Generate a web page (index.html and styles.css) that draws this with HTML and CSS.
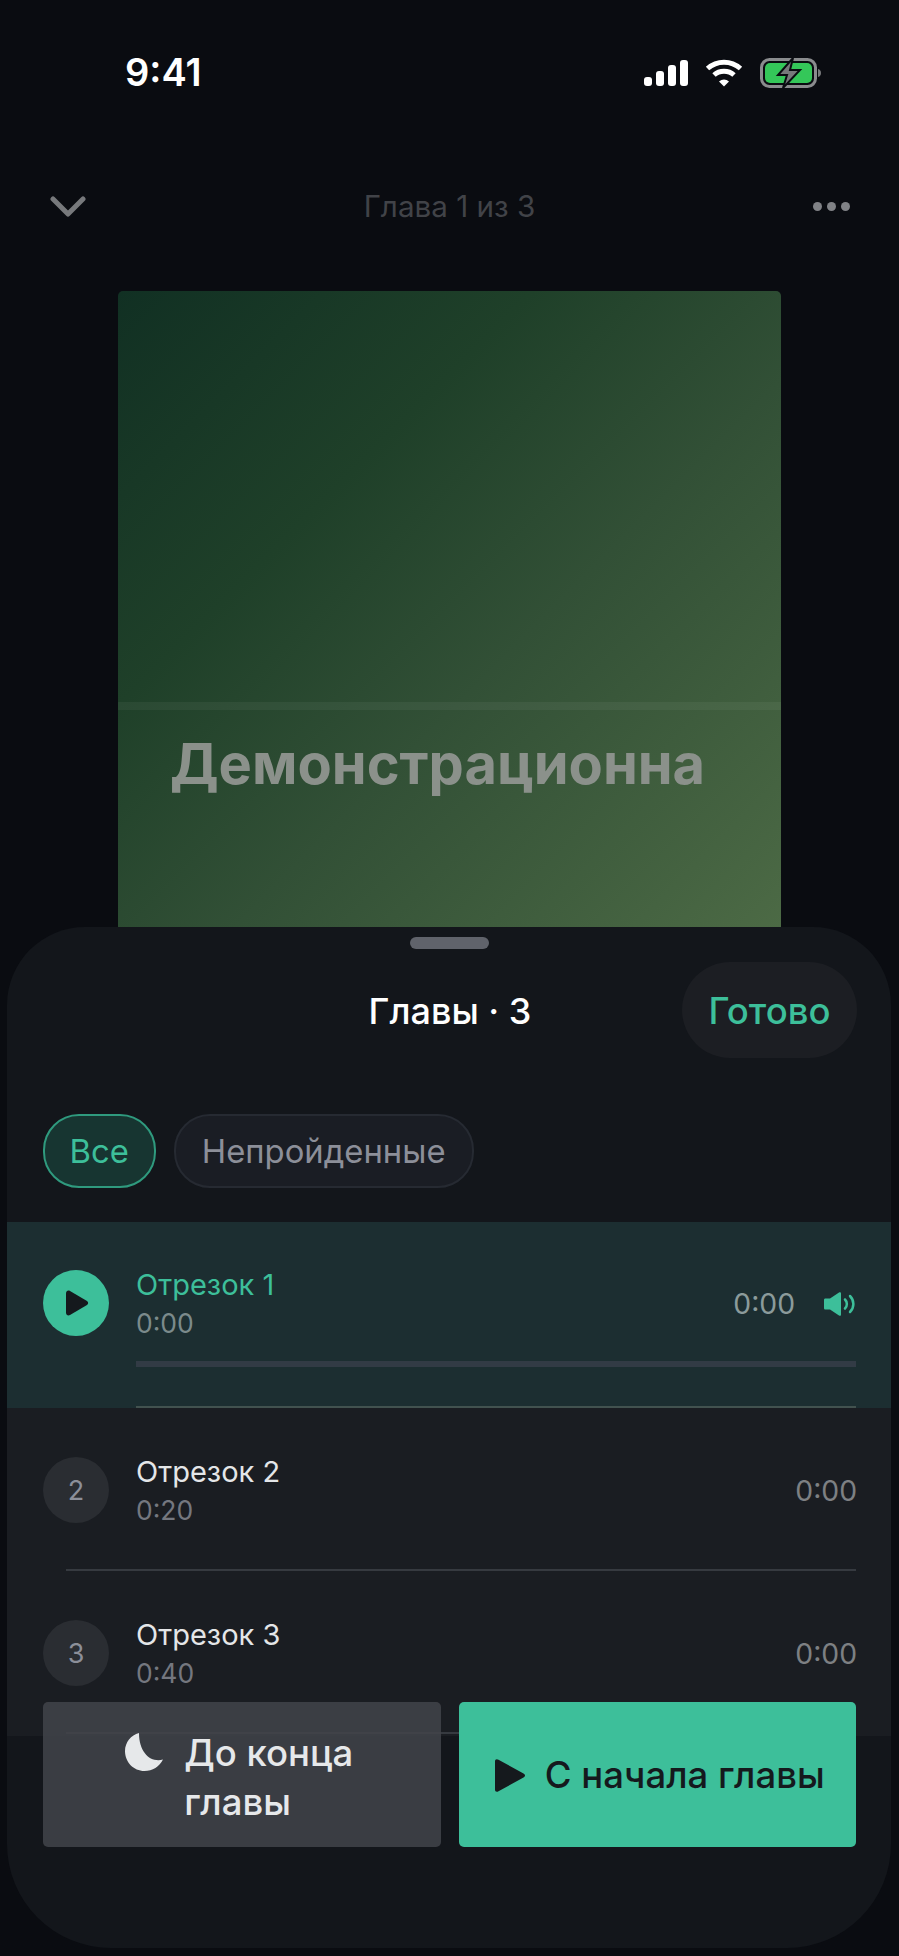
FILE: index.html
```html
<!DOCTYPE html>
<html lang="ru">
  <head>
    <meta charset="UTF-8" />
    <meta name="viewport" content="width=device-width, initial-scale=1.0" />
    <link rel="stylesheet" href="styles.css">
    <title>Главы</title>
  </head>
  <body>
    <div class="phone">
      <div class="status">
        <span class="time">9:41</span>
        <div class="status-icons">
          <svg class="signal" width="44" height="26" viewBox="0 0 44 26" fill="#fff">
            <rect x="0" y="17" width="8" height="9" rx="3"/>
            <rect x="12" y="11" width="8" height="15" rx="3"/>
            <rect x="24" y="5" width="8" height="21" rx="3"/>
            <rect x="36" y="0" width="8" height="26" rx="3"/>
          </svg>
          <svg class="wifi" width="38" height="28" viewBox="0 0 38 28" fill="none" stroke="#fff" stroke-width="5">
            <path d="M2.5 9.5C12 1 26 1 35.500 9.500"/>
            <path d="M9 16C14.500 11 23.500 11 29 16"/>
            <path d="M14 22.500L19 27.500L24 22.500C21 19.800 17 19.800 14 22.500Z" fill="#fff" stroke="none"/>
          </svg>
          <svg class="battery" width="62" height="30" viewBox="0 0 62 30" fill="none">
            <rect x="1.500" y="1.500" width="54" height="27" rx="8" stroke="#8a8c8e" stroke-width="3"/>
            <rect x="5" y="5" width="47" height="20" rx="5" fill="#34c759"/>
            <path d="M58 11c2 .5 3 2 3 4s-1 3.500-3 4z" fill="#77797b"/>
            <path d="M33 0L18 17h9l-4 13L40 12h-10z" fill="#77797b" stroke="#0a0c11" stroke-width="2"/>
          </svg>
        </div>
      </div>

      <div class="topbar">
        <svg width="36" height="22" viewBox="0 0 36 22" fill="none" stroke="#77797c" stroke-width="5" stroke-linecap="round" stroke-linejoin="round">
          <path d="M3 3L18 18L33 3"/>
        </svg>
        <span class="topbar-title">Глава 1 из 3</span>
        <div class="dots"><i></i><i></i><i></i></div>
      </div>

      <div class="cover">
        <div class="cover-line"></div>
        <div class="cover-title">Демонстрационна</div>
      </div>

      <div class="sheet">
        <div class="handle"></div>
        <div class="sheet-head">
          <span class="sheet-title">Главы · 3</span>
          <span class="done">Готово</span>
        </div>
        <div class="chips">
          <span class="chip chip-active">Все</span>
          <span class="chip">Непройденные</span>
        </div>

        <div class="list">
          <div class="row row-active">
            <div class="badge badge-play">
              <svg width="24" height="26" viewBox="0 0 24 26" fill="#15191d"><path d="M1 3.500C1 1 3 0 5 1L22 11c1.500 1 1.500 3 0 4L5 25c-2 1-4 0-4-2.500z"/></svg>
            </div>
            <div class="row-text">
              <div class="row-name">Отрезок 1</div>
              <div class="row-sub">0:00</div>
            </div>
            <span class="row-time">0:00</span>
            <svg class="speaker" width="32" height="24" viewBox="0 0 32 24" fill="none">
              <path d="M0 8c0-1 .5-1.500 1.500-1.500H6L15 .500C16.500-.300 17 .500 17 1.500v21c0 1-.5 1.800-2 1L6 17.500H1.500C.5 17.500 0 17 0 16z" fill="#3dbf9a"/>
              <path d="M21 7.500c2.500 2.500 2.500 6.500 0 9M26 4c4.500 4.500 4.500 11.500 0 16" stroke="#3dbf9a" stroke-width="2.500" stroke-linecap="round"/>
            </svg>
            <div class="progress"></div>
            <div class="row-line row-line-short"></div>
          </div>

          <div class="row">
            <div class="badge">2</div>
            <div class="row-text">
              <div class="row-name">Отрезок 2</div>
              <div class="row-sub">0:20</div>
            </div>
            <span class="row-time row-time-end">0:00</span>
            <div class="row-line"></div>
          </div>

          <div class="row">
            <div class="badge">3</div>
            <div class="row-text">
              <div class="row-name">Отрезок 3</div>
              <div class="row-sub">0:40</div>
            </div>
            <span class="row-time row-time-end">0:00</span>
            <div class="row-line"></div>
          </div>
        </div>

        <div class="actions">
          <div class="action action-sleep">
            <svg class="moon" width="38" height="38" viewBox="0 0 38 38"><path d="M14 0C6 2 0 9.500 0 18c0 11 8.500 20 19.500 20 8 0 15-4.500 18.500-11.500C26 30 14 20 14 0z" fill="#e6e8ea"/></svg>
            <span class="action-label">До конца<br>главы</span>
          </div>
          <div class="action action-play">
            <svg width="30" height="33" viewBox="0 0 30 33" fill="#15191d"><path d="M0 2.500C0 .5 1.500-.5 3.500.8L28.500 14.500c2 1 2 3 0 4L3.500 32.200C1.500 33.500 0 32.500 0 30.500z"/></svg>
            <span class="action-label">С начала главы</span>
          </div>
        </div>
      </div>
    </div>
  </body>
</html>
```

FILE: styles.css
```css
* {
  box-sizing: border-box;
}
body {
  margin: 0;
  background: #0a0c11;
  font-family: Inter, "Noto Sans", sans-serif;
}
.phone {
  width: 899px;
  height: 1956px;
  overflow: hidden;
}
.status {
  height: 146px;
  padding: 49px 77px 0 125px;
  display: flex;
  justify-content: space-between;
  align-items: flex-start;
}
.time {
  font-size: 38px;
  line-height: 46px;
  font-weight: 600;
  color: #fff;
}
.status-icons {
  display: flex;
  align-items: center;
  gap: 17px;
  padding-top: 9px;
}
.topbar {
  height: 145px;
  padding: 40px 49px 0 50px;
  display: flex;
  justify-content: space-between;
  align-items: flex-start;
}
.topbar svg {
  margin-top: 10px;
}
.topbar-title {
  font-size: 29.600px;
  line-height: 40px;
  color: #414348;
}
.dots {
  display: flex;
  gap: 5px;
  margin-top: 16px;
}
.dots i {
  width: 9px;
  height: 9px;
  border-radius: 50%;
  background: #808286;
}
.cover {
  width: 663px;
  height: 636px;
  margin-left: 118px;
  padding-top: 411px;
  border-radius: 5px 5px 0 0;
  background: linear-gradient(135deg, #113023 0%, #1f4029 32%, #325036 58%, #4c6a45 100%);
}
.cover-line {
  height: 8px;
  background: rgba(255, 255, 255, 0.05);
}
.cover-title {
  margin: 20px 0 0 52px;
  font-size: 56px;
  line-height: 68px;
  font-weight: 700;
  white-space: nowrap;
  color: #8b918b;
}
.sheet {
  position: relative;
  width: 884px;
  height: 1021px;
  margin-left: 7px;
  padding-top: 10px;
  border-radius: 78px 78px 104px 104px;
  background: #13161b;
}
.handle {
  width: 79px;
  height: 12px;
  margin: 0 auto;
  border-radius: 6px;
  background: #60636b;
}
.sheet-head {
  position: relative;
  height: 96px;
  margin-top: 13px;
  display: flex;
  justify-content: center;
  align-items: center;
}
.sheet-title {
  padding: 2px 0 0 2px;
  font-size: 36px;
  font-weight: 500;
  color: #fff;
}
.done {
  position: absolute;
  right: 34px;
  top: 0;
  width: 175px;
  height: 96px;
  padding-top: 2px;
  border-radius: 48px;
  background: #1c1e23;
  display: flex;
  justify-content: center;
  align-items: center;
  font-size: 36.500px;
  font-weight: 500;
  color: #3dbf9a;
}
.chips {
  display: flex;
  gap: 18px;
  margin-top: 56px;
  padding-left: 36px;
}
.chip {
  height: 74px;
  padding: 0 26px;
  border: 2px solid #262a32;
  border-radius: 36px;
  background: #1a1d24;
  display: flex;
  align-items: center;
  font-size: 32.800px;
  color: #8c8f99;
}
.chip-active {
  padding: 0 25px 0 24.500px;
  border-color: #2f9a7e;
  background: #173531;
  color: #3dbf9a;
}
.list {
  margin-top: 34px;
  height: 514px;
  background: #1a1d22;
}
.row {
  position: relative;
  height: 163px;
  padding: 49px 35px 0 36px;
  display: flex;
  align-items: flex-start;
}
.row-active {
  height: 186px;
  padding-top: 48px;
  background: #1c2e31;
}
.badge {
  flex: none;
  width: 66px;
  height: 66px;
  border-radius: 50%;
  background: #2a2d32;
  display: flex;
  justify-content: center;
  align-items: center;
  font-size: 27px;
  color: #8c8f99;
}
.badge-play {
  background: #3dbf9a;
  padding-left: 2px;
}
.row-text {
  flex: 1;
  margin-left: 27px;
  margin-top: -3px;
}
.row-name {
  font-size: 29px;
  line-height: 36px;
  color: #e4e6e8;
}
.row-active .row-name {
  color: #3dbf9a;
}
.row-sub {
  margin-top: 2px;
  font-size: 26.500px;
  line-height: 36px;
  color: #74777f;
}
.row-active .row-sub {
  color: #7b8a8b;
}
.row-time {
  margin-top: 16px;
  font-size: 28.300px;
  line-height: 36px;
  color: #7d8083;
}
.row-time-end {
  margin-right: -1px;
}
.row-active .row-time {
  color: #8b9b9b;
}
.speaker {
  margin: 22px 0 0 29px;
}
.progress {
  position: absolute;
  left: 129px;
  right: 35px;
  top: 139px;
  height: 6px;
  background: #323b45;
}
.row-line {
  position: absolute;
  left: 59px;
  right: 35px;
  bottom: 0;
  height: 2px;
  background: #363a40;
}
.row-line-short {
  left: 129px;
  background: #42524f;
}
.actions {
  position: absolute;
  left: 36px;
  right: 35px;
  top: 775px;
  display: flex;
  gap: 18px;
}
.action {
  flex: 1;
  height: 145px;
  border-radius: 5px;
  display: flex;
  justify-content: center;
  align-items: center;
  font-size: 36.500px;
  line-height: 49px;
  font-weight: 500;
}
.action-sleep {
  background: rgba(66, 68, 74, 0.85);
  color: #e6e8ea;
  align-items: flex-start;
  padding: 27px 5px 0 0;
  gap: 21px;
}
.action-play {
  padding: 1px 0 0 5px;
  background: #3dbf9a;
  color: #15191d;
  gap: 20px;
}
.moon {
  margin-top: 4px;
}
```
